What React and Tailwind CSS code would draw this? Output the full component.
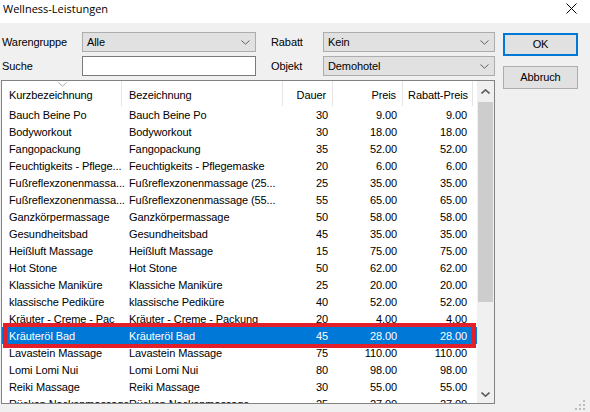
import React from "react";

const rows = [
  ["Bauch Beine Po", "Bauch Beine Po", "30", "9.00", "9.00"],
  ["Bodyworkout", "Bodyworkout", "30", "18.00", "18.00"],
  ["Fangopackung", "Fangopackung", "35", "52.00", "52.00"],
  ["Feuchtigkeits - Pflege...", "Feuchtigkeits - Pflegemaske", "20", "6.00", "6.00"],
  ["Fußreflexzonenmassa...", "Fußreflexzonenmassage (25...", "25", "35.00", "35.00"],
  ["Fußreflexzonenmassa...", "Fußreflexzonenmassage (55...", "55", "65.00", "65.00"],
  ["Ganzkörpermassage", "Ganzkörpermassage", "50", "58.00", "58.00"],
  ["Gesundheitsbad", "Gesundheitsbad", "45", "35.00", "35.00"],
  ["Heißluft Massage", "Heißluft Massage", "15", "75.00", "75.00"],
  ["Hot Stone", "Hot Stone", "50", "62.00", "62.00"],
  ["Klassiche Maniküre", "Klassiche Maniküre", "25", "20.00", "20.00"],
  ["klassische Pediküre", "klassische Pediküre", "40", "52.00", "52.00"],
  ["Kräuter - Creme - Pac", "Kräuter - Creme - Packung", "20", "4.00", "4.00"],
  ["Kräuteröl Bad", "Kräuteröl Bad", "45", "28.00", "28.00"],
  ["Lavastein Massage", "Lavastein Massage", "75", "110.00", "110.00"],
  ["Lomi Lomi Nui", "Lomi Lomi Nui", "80", "98.00", "98.00"],
  ["Reiki Massage", "Reiki Massage", "30", "55.00", "55.00"],
  ["Rücken Nackenmassage", "Rücken Nackenmassage", "25", "27.00", "27.00"],
];

const Chevron = ({ up = false, color = "#606060", w = 1 }) => (
  <svg width="9" height="5" viewBox="0 0 9 5">
    <path
      d={up ? "M0.5 4.5 L4.5 0.8 L8.5 4.5" : "M0.5 0.5 L4.5 4.2 L8.5 0.5"}
      fill="none"
      stroke={color}
      strokeWidth={w}
    />
  </svg>
);

const Combo = ({ value, width }) => (
  <div
    className={`${width} h-[20px] flex items-center justify-between bg-[#e1e1e1] border border-[#adadad] pl-[4px] pr-[5px]`}
  >
    <span>{value}</span>
    <Chevron />
  </div>
);

const cols = "grid grid-cols-[120px_161px_50px_70px_70px]";

export default function App() {
  return (
    <div className="relative w-[590px] h-[412px] overflow-hidden bg-[#f0f0f0] text-black text-[11px] tracking-[-0.1px] font-['Liberation_Sans',Arial,sans-serif]">
      {/* title bar */}
      <div className="h-[23px] bg-white flex items-start justify-between">
        <span className="pl-[3px] pt-[2px] leading-[14px] text-[11px] tracking-normal font-['Open_Sans',sans-serif]">
          Wellness-Leistungen
        </span>
        <svg width="11" height="11" viewBox="0 0 11 11" className="mt-[3px] mr-[13px]">
          <path d="M0.5 0.5 L10.5 10.5 M10.5 0.5 L0.5 10.5" stroke="#000" strokeWidth="1" />
        </svg>
      </div>

      <div className="flex gap-[8px] pt-[9px] pl-[1px]">
        {/* left part */}
        <div className="w-[494px] flex flex-col gap-[4px]">
          <div className="flex items-center h-[20px]">
            <span className="w-[81px] pl-[1px]">Warengruppe</span>
            <Combo value="Alle" width="w-[174px]" />
            <span className="w-[67px] pl-[15px]">Rabatt</span>
            <Combo value="Kein" width="w-[172px]" />
          </div>
          <div className="flex items-center h-[20px]">
            <span className="w-[81px] pl-[1px]">Suche</span>
            <div className="w-[174px] h-[20px] bg-white border border-[#7a7a7a]" />
            <span className="w-[67px] pl-[15px]">Objekt</span>
            <Combo value="Demohotel" width="w-[172px]" />
          </div>

          {/* list view */}
          <div className="h-[324px] bg-white border border-[#828282] flex">
            <div className="w-[475px] flex flex-col">
              <div className={`${cols} h-[25px]`}>
                <div className="relative flex items-center pt-[3px] pl-[7px] border-r border-[#e5e5e5]">
                  Kurzbezeichnung
                  <span className="absolute left-[56px] top-[1px] leading-none">
                    <Chevron color="#a8a8a8" />
                  </span>
                </div>
                <div className="flex items-center pt-[3px] pl-[7px] border-r border-[#e5e5e5]">Bezeichnung</div>
                <div className="flex items-center justify-end pt-[3px] pr-[6px] border-r border-[#e5e5e5]">Dauer</div>
                <div className="flex items-center justify-end pt-[3px] pr-[6px] border-r border-[#e5e5e5]">Preis</div>
                <div className="flex items-center justify-end pt-[3px] pr-[4px] border-r border-[#e5e5e5]">Rabatt-Preis</div>
              </div>
              <div className="flex-1 overflow-hidden">
                {rows.map((r, i) => (
                  <div
                    key={i}
                    className={`${cols} h-[17px] leading-[17px] pt-[1px] whitespace-nowrap ${
                      i === 13 ? "bg-[#0078d7] text-white" : ""
                    }`}
                  >
                    <div className="pl-[7px]">{r[0]}</div>
                    <div className="pl-[7px] overflow-hidden">{r[1]}</div>
                    <div className="text-right pr-[5px]">{r[2]}</div>
                    <div className="text-right pr-[6px]">{r[3]}</div>
                    <div className="text-right pr-[6px]">{r[4]}</div>
                  </div>
                ))}
              </div>
            </div>

            {/* scrollbar */}
            <div className="w-[17px] bg-[#f0f0f0] flex flex-col">
              <div className="h-[21px] flex items-center justify-center">
                <Chevron up w={1.6} />
              </div>
              <div className="h-[200px] mx-[1px] bg-[#cdcdcd]" />
              <div className="flex-1" />
              <div className="h-[17px] flex items-center justify-center">
                <Chevron w={1.6} />
              </div>
            </div>
          </div>
        </div>

        {/* buttons */}
        <div className="w-[75px] flex flex-col gap-[10px] pt-[1px]">
          <button className="h-[23px] bg-[#e1e1e1] border-2 border-[#0078d7]">OK</button>
          <button className="h-[23px] bg-[#e1e1e1] border border-[#adadad]">Abbruch</button>
        </div>
      </div>

      {/* annotation around selected row */}
      <div className="absolute left-[3px] top-[323px] w-[473px] h-[25px] border-4 border-[#e3202a]" />

      {/* resize grip */}
      <svg width="10" height="10" viewBox="0 0 10 10" className="absolute right-[5px] bottom-[2px]">
        <g fill="#bcbcbc">
          <rect x="8" y="0" width="2" height="2" />
          <rect x="4" y="4" width="2" height="2" />
          <rect x="8" y="4" width="2" height="2" />
          <rect x="0" y="8" width="2" height="2" />
          <rect x="4" y="8" width="2" height="2" />
          <rect x="8" y="8" width="2" height="2" />
        </g>
      </svg>
    </div>
  );
}
